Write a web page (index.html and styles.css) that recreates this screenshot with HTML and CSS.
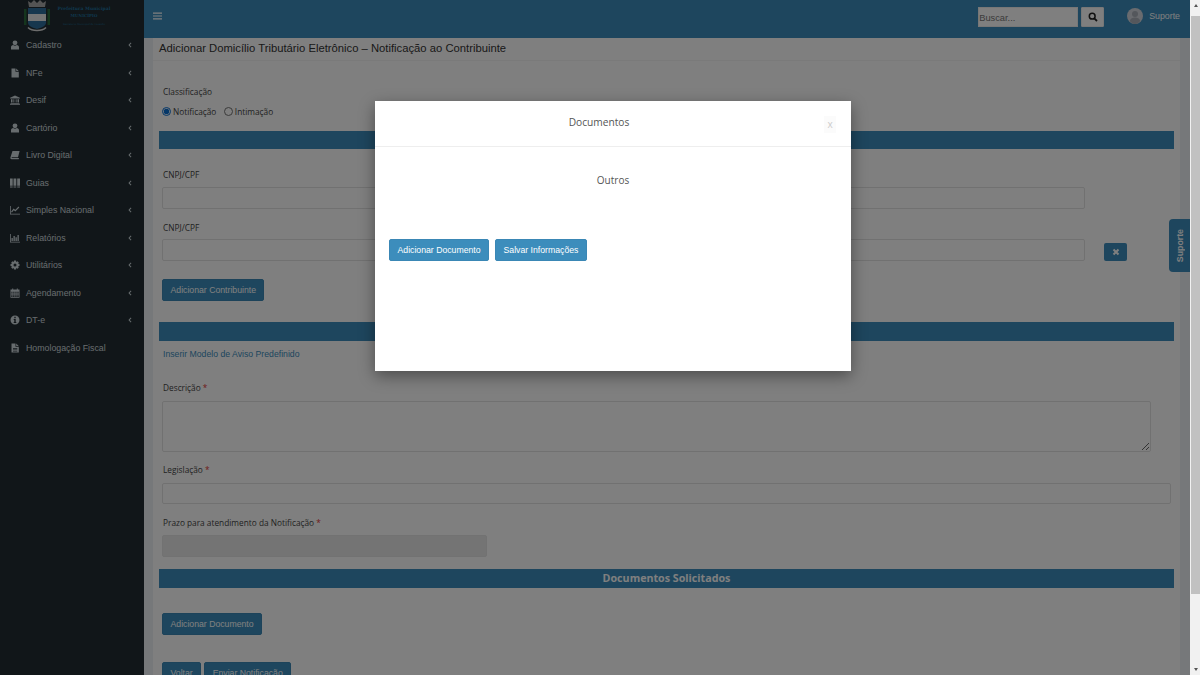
FILE: index.html
```html
<!DOCTYPE html>
<html lang="pt">
<head>
<meta charset="utf-8">
<title>Adicionar Domicílio Tributário Eletrônico</title>
<link rel="stylesheet" href="styles.css">
</head>
<body>
<svg class="defs" width="0" height="0">
  <symbol id="i-user" viewBox="0 0 10 10"><circle cx="5" cy="2.800" r="2.400"/><path d="M1 9.600V7.400C1 6 2 5.200 3.200 5.100 3.700 5.500 4.300 5.700 5 5.700s1.300-.2 1.800-.6C8 5.200 9 6 9 7.400v2.200z"/></symbol>
  <symbol id="i-file" viewBox="0 0 10 10"><path d="M1.500.5H5.500V3.800H8.800V9.600H1.500zM6.200.6 8.700 3.100H6.200z"/></symbol>
  <symbol id="i-bank" viewBox="0 0 10 10"><path d="M5 .5 9.900 2.800V3.500H.1V2.800zM1 4.200H2.500V7.500H1zM3.400 4.200H4.300V7.500H3.400zM5.700 4.200H6.600V7.500H5.700zM7.500 4.200H9V7.500H7.500zM.5 8H9.500V8.800H.5zM0 9H10V9.800H0z"/></symbol>
  <symbol id="i-book" viewBox="0 0 10 10"><path d="M2.500 1H9.600L8 7.300H2C1.500 7.300 1.400 7.900 2 8H9L8.700 9.200H1.600C.7 9.200.2 8.500.4 7.500z"/></symbol>
  <symbol id="i-cols" viewBox="0 0 10 10"><path d="M0 .5H2.700V7.700H0zM3.500 .5H6.300V7.700H3.500zM7.200 .5H10V7.700H7.200zM0 8.500H2.700V9.500H0zM3.500 8.500H6.300V9.500H3.500zM7.200 8.500H10V9.500H7.200z"/></symbol>
  <symbol id="i-line" viewBox="0 0 10 10"><path d="M0 1H.8V8.700H10V9.500H0z"/><path class="ln" d="M1.500 7.200 3.700 4.300 5.300 5.700 8.900 2"/></symbol>
  <symbol id="i-bar" viewBox="0 0 10 10"><path d="M0 1H.8V8.700H10V9.500H0zM1.500 5H2.800V8H1.500zM3.500 3H4.800V8H3.500zM5.500 4.300H6.800V8H5.500zM7.500 2H8.800V8H7.500z"/></symbol>
  <symbol id="i-cog" viewBox="0 0 10 10"><path fill-rule="evenodd" d="M4 .5H6L6.300 1.900 7.500 1.200 8.800 2.500 8.100 3.700 9.500 4V6L8.100 6.300 8.800 7.500 7.500 8.800 6.300 8.100 6 9.500H4L3.700 8.100 2.500 8.800 1.200 7.500 1.900 6.300.5 6V4L1.900 3.700 1.200 2.500 2.500 1.200 3.700 1.900zM5 3.500A1.500 1.500 0 1 0 5 6.500 1.500 1.500 0 1 0 5 3.500z"/></symbol>
  <symbol id="i-cal" viewBox="0 0 10 10"><path fill-rule="evenodd" d="M.5 1.500H2.200V.5H3.200V1.500H6.800V.5H7.800V1.500H9.500V9.700H.5zM1.300 3.700V4.800H2.500V3.700zM3.200 3.700V4.800H4.500V3.700zM5.300 3.700V4.800H6.600V3.700zM7.300 3.700V4.800H8.700V3.700zM1.300 5.500V6.600H2.500V5.500zM3.200 5.500V6.600H4.500V5.500zM5.300 5.500V6.600H6.600V5.500zM7.300 5.500V6.600H8.700V5.500zM1.300 7.300V8.900H2.500V7.300zM3.200 7.300V8.900H4.500V7.300zM5.300 7.300V8.900H6.600V7.300zM7.300 7.300V8.900H8.700V7.300z"/></symbol>
  <symbol id="i-info" viewBox="0 0 10 10"><path fill-rule="evenodd" d="M5 .5A4.500 4.500 0 1 1 5 9.500 4.500 4.500 0 1 1 5 .5zM4.300 1.800V3.200H5.700V1.800zM3.700 4V4.900H4.300V7H3.700V8H6.300V7H5.700V4z"/></symbol>
  <symbol id="i-text" viewBox="0 0 10 10"><path fill-rule="evenodd" d="M1.500.5H5.500V3.800H8.800V9.600H1.500zM3 5V5.700H7.300V5zM3 6.500V7.200H7.300V6.500zM3 8V8.600H7.300V8zM6.200.6 8.700 3.100H6.200z"/></symbol>
  <symbol id="i-chev" viewBox="0 0 6 10"><path class="chl" d="M4.800 1.500 1.500 5 4.800 8.500"/></symbol>
</svg>

<div class="screen">
  <div class="page">
    <aside class="sidebar">
      <div class="brand">
        <svg class="crest" width="28" height="32" viewBox="0 0 28 32">
          <path fill="#a8a8a8" d="M5 1 8 3 11 0 14 3 17 0 20 3 23 1 22 7H6z"/>
          <path fill="#2a6a3a" d="M1 9H3.500V25H1zM24.500 9H27V25H24.500z"/>
          <path fill="#2f6e9c" d="M5 8H23V23C23 26 18 28 14 29 10 28 5 26 5 23z"/>
          <path fill="#e8e8e8" d="M5 14H23V21H5z"/>
          <path fill="none" stroke="#d8d8d8" stroke-width="1.500" d="M5 27.500C9 31.500 19 31.500 23 27.500"/>
        </svg>
        <div class="brand-text">
          <strong class="brand-l1">Prefeitura Municipal</strong>
          <strong class="brand-l2">MUNICÍPIO</strong>
          <span class="brand-l3">Secretaria Municipal da Fazenda</span>
        </div>
      </div>
      <nav class="menu">
        <a class="menu-item"><svg class="mi"><use href="#i-user"/></svg><span class="ml">Cadastro</span><svg class="chev"><use href="#i-chev"/></svg></a>
        <a class="menu-item"><svg class="mi"><use href="#i-file"/></svg><span class="ml">NFe</span><svg class="chev"><use href="#i-chev"/></svg></a>
        <a class="menu-item"><svg class="mi"><use href="#i-bank"/></svg><span class="ml">Desif</span><svg class="chev"><use href="#i-chev"/></svg></a>
        <a class="menu-item"><svg class="mi"><use href="#i-user"/></svg><span class="ml">Cartório</span><svg class="chev"><use href="#i-chev"/></svg></a>
        <a class="menu-item"><svg class="mi"><use href="#i-book"/></svg><span class="ml">Livro Digital</span><svg class="chev"><use href="#i-chev"/></svg></a>
        <a class="menu-item"><svg class="mi"><use href="#i-cols"/></svg><span class="ml">Guias</span><svg class="chev"><use href="#i-chev"/></svg></a>
        <a class="menu-item"><svg class="mi"><use href="#i-line"/></svg><span class="ml">Simples Nacional</span><svg class="chev"><use href="#i-chev"/></svg></a>
        <a class="menu-item"><svg class="mi"><use href="#i-bar"/></svg><span class="ml">Relatórios</span><svg class="chev"><use href="#i-chev"/></svg></a>
        <a class="menu-item"><svg class="mi"><use href="#i-cog"/></svg><span class="ml">Utilitários</span><svg class="chev"><use href="#i-chev"/></svg></a>
        <a class="menu-item"><svg class="mi"><use href="#i-cal"/></svg><span class="ml">Agendamento</span><svg class="chev"><use href="#i-chev"/></svg></a>
        <a class="menu-item"><svg class="mi"><use href="#i-info"/></svg><span class="ml">DT-e</span><svg class="chev"><use href="#i-chev"/></svg></a>
        <a class="menu-item"><svg class="mi"><use href="#i-text"/></svg><span class="ml">Homologação Fiscal</span></a>
      </nav>
    </aside>

    <div class="main">
      <header class="topbar">
        <svg class="burger" width="9" height="8" viewBox="0 0 9 8"><path d="M0 .5H9V1.700H0zM0 3.400H9V4.600H0zM0 6.300H9V7.500H0z"/></svg>
        <div class="search">
          <input class="search-input" placeholder="Buscar...">
          <button class="search-btn"><svg width="10" height="10" viewBox="0 0 10 10"><circle cx="4.200" cy="4.200" r="2.900" fill="none" stroke="#222" stroke-width="1.500"/><path d="M6.300 6.300 9 9" stroke="#222" stroke-width="1.800"/></svg></button>
        </div>
        <div class="account">
          <svg class="avatar" width="16" height="16" viewBox="0 0 16 16"><circle cx="8" cy="8" r="8" fill="#d2d6de"/><circle cx="8" cy="6" r="3" fill="#a8aeb8"/><path fill="#a8aeb8" d="M2.800 13C3.500 10.300 5.500 9.500 8 9.500s4.500.8 5.200 3.500C11.800 15 9.800 16 8 16S4.200 15 2.800 13z"/></svg>
          <span>Suporte</span>
        </div>
      </header>

      <div class="content">
        <section class="box">
          <h1 class="page-title">Adicionar Domicílio Tributário Eletrônico – Notificação ao Contribuinte</h1>
          <form class="form">
            <label class="label label-first">Classificação</label>
            <div class="radios">
              <label class="radio"><input type="radio" name="c" checked>Notificação</label>
              <label class="radio"><input type="radio" name="c">Intimação</label>
            </div>
            <div class="bar bar-1">Contribuinte</div>
            <label class="label label-cnpj">CNPJ/CPF</label>
            <input class="field field-contrib">
            <label class="label label-cnpj2">CNPJ/CPF</label>
            <div class="row-contrib">
              <input class="field field-contrib2">
              <button type="button" class="btn-x"><svg width="8" height="8" viewBox="0 0 8 8"><path d="M1.500 1.500 6.500 6.500M6.500 1.500 1.500 6.500" stroke="#fff" stroke-width="2"/></svg></button>
            </div>
            <button type="button" class="btn btn-contrib">Adicionar Contribuinte</button>
            <div class="bar bar-2">Aviso</div>
            <a class="link">Inserir Modelo de Aviso Predefinido</a>
            <label class="label label-desc">Descrição <i>*</i></label>
            <textarea class="field area"></textarea>
            <label class="label label-leg">Legislação <i>*</i></label>
            <input class="field field-leg">
            <label class="label label-prazo">Prazo para atendimento da Notificação <i>*</i></label>
            <input class="field field-prazo" disabled>
            <div class="bar bar-3">Documentos Solicitados</div>
            <button type="button" class="btn btn-doc">Adicionar Documento</button>
            <div class="actions">
              <button type="button" class="btn">Voltar</button>
              <button type="button" class="btn">Enviar Notificação</button>
            </div>
          </form>
        </section>
      </div>
    </div>
    <div class="tab-suporte"><span>Suporte</span></div>
  </div>

  <div class="scrollbar">
    <div class="sb-arrow"></div>
    <div class="sb-thumb"></div>
    <div class="sb-arrow-down"></div>
  </div>

  <div class="overlay">
    <div class="modal">
      <div class="modal-head">
        <h2 class="modal-title">Documentos</h2>
        <span class="modal-close">x</span>
      </div>
      <div class="modal-body">
        <p class="modal-sub">Outros</p>
        <div class="modal-actions">
          <button class="btn">Adicionar Documento</button>
          <button class="btn">Salvar Informações</button>
        </div>
      </div>
    </div>
  </div>
</div>
</body>
</html>
```

FILE: styles.css
```css
* { box-sizing: border-box; }
html, body { margin: 0; padding: 0; height: 100%; overflow: hidden; }
body { font-family: "Liberation Sans", Arial, sans-serif; font-size: 10px; color: #333; }
.defs { position: absolute; }

.screen { position: relative; display: flex; width: 1200px; height: 675px; overflow: hidden; background: #fff; }
.page { position: relative; display: flex; width: 1190px; height: 675px; overflow: hidden; }

.sidebar { flex: 0 0 144px; background: #222d32; color: #cfd8dd; }
.brand { display: flex; height: 31.500px; padding-left: 23px; overflow: hidden; }
.crest { flex: none; }
.brand-text { display: flex; flex-direction: column; align-items: center; width: 58px; margin-left: 4px; padding-top: 5px; color: #1f6f9c; font-family: "DejaVu Serif", serif; }
.brand-l1 { font-size: 4.500px; line-height: 7px; white-space: nowrap; }
.brand-l2 { font-size: 4px; line-height: 7px; }
.brand-l3 { margin-top: 2px; font-size: 2.500px; line-height: 8px; white-space: nowrap; }

.menu { display: flex; flex-direction: column; }
.menu-item { display: flex; align-items: center; height: 27.500px; padding: 0 12px 0 10px; }
.mi { flex: none; width: 10px; height: 10px; margin-right: 6px; fill: #cfd8dd; }
.ln { fill: none; stroke: #cfd8dd; stroke-width: 1.100; }
.chl { fill: none; stroke: #cfd8dd; stroke-width: 1.700; }
.ml { flex: 1; font-size: 8.800px; white-space: nowrap; }
.chev { flex: none; width: 4px; height: 6px; }

.main { flex: 1; display: flex; flex-direction: column; min-width: 0; background: #ecf0f5; }
.topbar { flex: none; display: flex; align-items: flex-start; height: 38px; background: #3c8dbc; }
.burger { margin: 11.500px 0 0 9px; fill: #fff; }
.search { display: flex; margin: 7px 0 0 auto; }
.search-input { width: 100px; height: 20px; padding: 2px 0 0; border: 1px solid #eee; background: #fff; font: 9.300px "Liberation Sans", sans-serif; }
.search-input::placeholder { color: #777; }
.search-btn { display: flex; align-items: center; justify-content: center; width: 23px; height: 20px; margin-left: 3px; padding: 0; border: 1px solid #eee; border-radius: 1px; background: #fff; }
.account { display: flex; align-items: center; gap: 6px; margin: 8px 10px 0 23px; color: #fff; font-size: 8.800px; }

.content { flex: 1; padding-left: 9px; padding-right: 10px; min-height: 0; }
.box { height: 700px; background: #fff; }
.page-title { height: 23px; margin: 0; padding-left: 6px; border-bottom: 1px solid #f4f4f4; font-size: 11.250px; font-weight: 400; line-height: 20px; color: #333; }

.form { display: flex; flex-direction: column; align-items: flex-start; padding: 0 6px; font-family: "Open Sans", sans-serif; }
.label { margin: 0; padding-left: 4px; font-size: 8.300px; line-height: 12px; color: #444; }
.label i { font-style: normal; color: #d33; }
.label-first { margin-top: 25px; }
.radios { display: flex; gap: 7.500px; margin: 7px 0 0 3px; }
.radio { display: flex; align-items: center; font-size: 8.300px; line-height: 14px; color: #444; }
.radio input { width: 9px; height: 9px; margin: 0 2px 2px 0; accent-color: #0a6ed1; }

.bar { align-self: stretch; height: 19px; background: #3c8dbc; color: #fff; font-size: 10.700px; font-weight: 700; line-height: 19px; text-align: center; }
.bar-1 { height: 18.500px; margin-top: 11.500px; }
.label-cnpj { margin-top: 19.500px; }
.field { display: block; margin: 0 0 0 3px; border: 1px solid #e2e2e2; border-radius: 2px; background: #fff; }
.field-contrib { width: 923px; height: 22px; margin-top: 6.500px; }
.label-cnpj2 { margin-top: 13px; }
.row-contrib { display: flex; align-items: flex-start; }
.field-contrib2 { width: 923px; height: 22px; margin-top: 5px; }
.btn-x { display: flex; align-items: center; justify-content: center; width: 23px; height: 18px; margin: 9px 0 0 19px; padding: 0; border: 0; border-radius: 2px; background: #3c8dbc; }
.btn { height: 22px; padding: 0 7.500px; border: 1px solid #3a87b5; border-radius: 2px; background: #3c8dbc; color: #fff; font: 8.700px "Liberation Sans", sans-serif; white-space: nowrap; }
.btn-contrib { margin: 18px 0 0 3px; }
.bar-2 { margin-top: 21px; }
.link { margin: 7px 0 0 4px; font: 8.700px/12px "Liberation Sans", sans-serif; color: #3c8dbc; }
.label-desc { margin-top: 22px; }
.area { width: 989px; height: 51px; margin-top: 7px; resize: both; }
.label-leg { margin-top: 12px; }
.field-leg { width: 1009px; height: 21px; margin-top: 7px; }
.label-prazo { margin-top: 13px; }
.field-prazo { width: 325px; height: 22px; margin-top: 6px; background: #e9e9e9; border-color: #e4e4e4; }
.bar-3 { margin-top: 12px; }
.btn-doc { margin: 25px 0 0 3px; }
.actions { display: flex; gap: 3px; margin: 27px 0 0 3px; }

.tab-suporte { position: absolute; top: 219px; right: 0; display: flex; align-items: center; justify-content: center; width: 21px; height: 53px; border-radius: 4px 0 0 4px; background: #3c8dbc; color: #fff; font-size: 8.800px; font-weight: 700; }
.tab-suporte span { writing-mode: vertical-rl; transform: rotate(180deg); }

.scrollbar { display: flex; flex-direction: column; flex: 0 0 10px; padding-left: 1px; background: #f1f1f1; }
.sb-arrow { flex: none; width: 0; height: 0; margin: 4px auto 9px; border: 2.500px solid transparent; border-top: 0; border-bottom: 3px solid #555; }
.sb-thumb { flex: none; width: 9px; height: 578px; background: #c1c1c1; }
.sb-arrow-down { flex: none; width: 0; height: 0; margin: auto auto 4px; border: 2.500px solid transparent; border-bottom: 0; border-top: 3px solid #555; }

.overlay { position: absolute; top: 0; left: 0; width: 1190px; height: 675px; background: rgba(0,0,0,.5); }
.modal { position: absolute; top: 101px; left: 375px; display: flex; flex-direction: column; width: 476px; height: 270px; background: #fff; box-shadow: 0 5px 15px rgba(0,0,0,.4); font-family: "Open Sans", sans-serif; color: #555; }
.modal-head { position: relative; flex: none; height: 46px; padding-right: 28px; border-bottom: 1px solid #eee; text-align: center; }
.modal-title { margin: 0; padding-top: 14px; font-size: 10.200px; line-height: 15px; font-weight: 400; color: #555; }
.modal-close { position: absolute; top: 15px; right: 15px; width: 12px; height: 17px; color: #ccc; font-size: 10px; line-height: 17px; background: #fbfbfb; }
.modal-body { display: flex; flex-direction: column; flex: 1; padding: 0 14px; }
.modal-sub { margin: 26px 0 0; font-size: 10px; line-height: 15px; text-align: center; }
.modal-actions { display: flex; gap: 6px; margin-top: 51px; }
```
